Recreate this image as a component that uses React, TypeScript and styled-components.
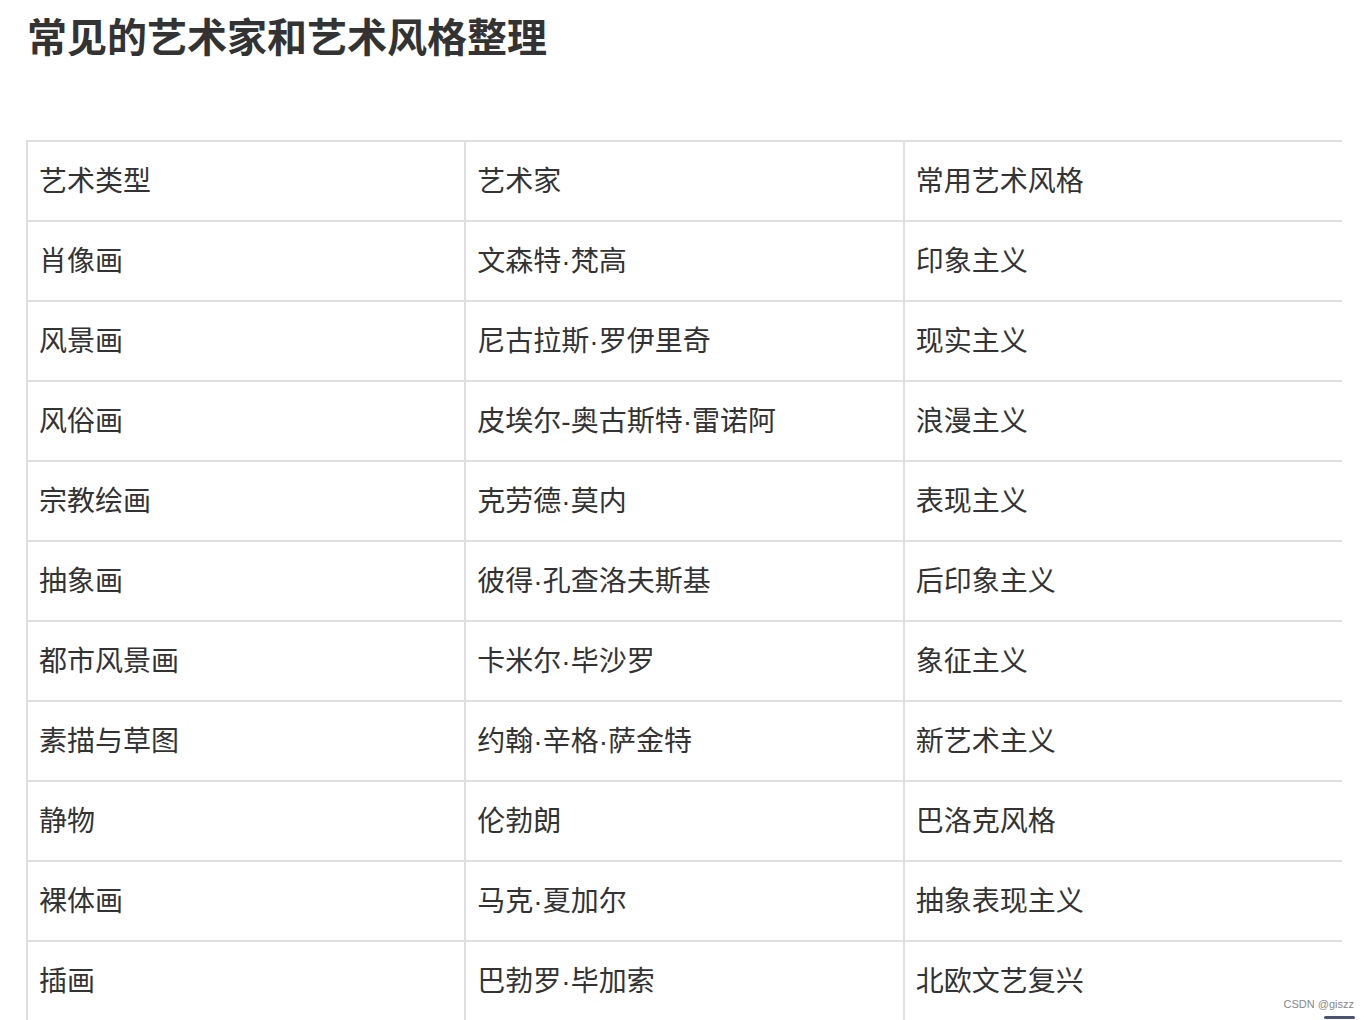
import { createGlobalStyle, styled } from "styled-components"

const GlobalStyle = createGlobalStyle`
    html, body {
        margin: 0;
        padding: 0;
        background: #fff;
        overflow: hidden;
    }
    body {
        font-family: "Liberation Sans", "Noto Sans CJK SC", sans-serif;
        color: #333;
    }
`

const Page = styled.div`
    position: relative;
    width: 1368px;
    height: 1020px;
    overflow: hidden;
    padding: 12px 0 0 26px;
    box-sizing: border-box;
`

const Title = styled.h1`
    margin: 0 0 82px 1px;
    font-family: "Noto Sans CJK SC", sans-serif;
    font-size: 40px;
    line-height: 46px;
    font-weight: 700;
    color: #333;
`

const Table = styled.table`
    border-collapse: collapse;
    width: 1316px;
    table-layout: fixed;
    border-top: 2px solid #dfdfdf;
`

const Cell = styled.td<{ $last?: boolean }>`
    height: 76px;
    padding: 2px 11px 0;
    border-left: 2px solid #dfdfdf;
    border-bottom: 2px solid #dfdfdf;
    border-right: ${(p) => (p.$last ? "none" : "2px solid #dfdfdf")};
    font-size: 28px;
    line-height: 30px;
    color: #333;
    vertical-align: middle;
    white-space: nowrap;
    box-sizing: content-box;
`

const Watermark = styled.div`
    position: absolute;
    right: 14px;
    bottom: 10px;
    font-family: "Liberation Sans", Arial, sans-serif;
    font-size: 11px;
    color: #888;
`

const Bar = styled.div`
    position: absolute;
    right: 13px;
    bottom: 1px;
    width: 31px;
    height: 3px;
    border-radius: 2px;
    background: #4a5470;
`

const rows = [
    ["艺术类型", "艺术家", "常用艺术风格"],
    ["肖像画", "文森特·梵高", "印象主义"],
    ["风景画", "尼古拉斯·罗伊里奇", "现实主义"],
    ["风俗画", "皮埃尔-奥古斯特·雷诺阿", "浪漫主义"],
    ["宗教绘画", "克劳德·莫内", "表现主义"],
    ["抽象画", "彼得·孔查洛夫斯基", "后印象主义"],
    ["都市风景画", "卡米尔·毕沙罗", "象征主义"],
    ["素描与草图", "约翰·辛格·萨金特", "新艺术主义"],
    ["静物", "伦勃朗", "巴洛克风格"],
    ["裸体画", "马克·夏加尔", "抽象表现主义"],
    ["插画", "巴勃罗·毕加索", "北欧文艺复兴"],
]

export default function App() {
    return (
        <>
            <GlobalStyle />
            <Page>
                <Title>常见的艺术家和艺术风格整理</Title>
                <Table>
                    <tbody>
                        {rows.map((r, i) => (
                            <tr key={i}>
                                {r.map((c, j) => (
                                    <Cell key={j} $last={j === 2}>{c}</Cell>
                                ))}
                            </tr>
                        ))}
                    </tbody>
                </Table>
                <Watermark>CSDN @giszz</Watermark>
                <Bar />
            </Page>
        </>
    )
}
